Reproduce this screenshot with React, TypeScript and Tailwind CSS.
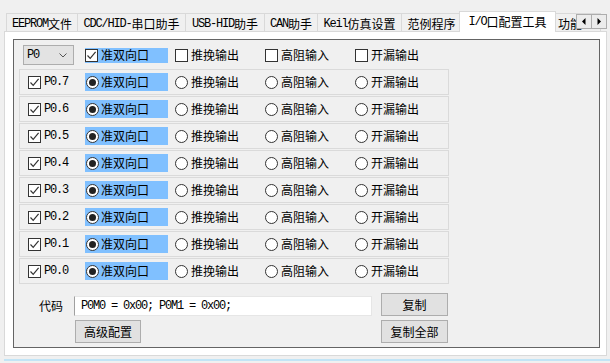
import React from "react";

const Mixed = ({ s }: { s: string }) => (
  <>
    {s
      .split(/([\x20-\x7e]+)/)
      .filter(Boolean)
      .map((p, i) =>
        /^[\x20-\x7e]+$/.test(p) ? (
          <span key={i} className="font-['Liberation_Mono',monospace] tracking-[-1.2px] whitespace-pre">
            {p}
          </span>
        ) : (
          <span key={i} className="font-['Noto_Sans_CJK_SC',sans-serif]">
            {p}
          </span>
        )
      )}
  </>
);

const Check = ({ on }: { on?: boolean }) => (
  <span className="w-[13px] h-[13px] border border-[#333333] bg-white flex items-center justify-center shrink-0">
    {on && (
      <svg width="11" height="11" viewBox="0 0 11 11">
        <path d="M1.5 5.5 L4.2 8.3 L9.6 1.8" fill="none" stroke="#333333" strokeWidth="1.2" />
      </svg>
    )}
  </span>
);

const Radio = ({ on }: { on?: boolean }) => (
  <span className="w-[13px] h-[13px] rounded-full border border-[#333333] bg-white flex items-center justify-center shrink-0">
    {on && <span className="w-[7px] h-[7px] rounded-full bg-[#222222]" />}
  </span>
);

const tabs: { label: string; w: string; sel?: boolean }[] = [
  { label: "EEPROM文件", w: "w-[72px]" },
  { label: "CDC/HID-串口助手", w: "w-[109px]" },
  { label: "USB-HID助手", w: "w-[80px]" },
  { label: "CAN助手", w: "w-[54px]" },
  { label: "Keil仿真设置", w: "w-[85px]" },
  { label: "范例程序", w: "w-[61px]" },
];

const pins = ["P0.7", "P0.6", "P0.5", "P0.4", "P0.3", "P0.2", "P0.1", "P0.0"];
const opts = ["推挽输出", "高阻输入", "开漏输出"];

export default function App() {
  return (
    <div className="w-[610px] h-[363px] bg-[#f0f0f0] relative overflow-hidden text-[12px] leading-[14px] text-black font-['Noto_Sans_CJK_SC',sans-serif]">
      {/* tab strip */}
      <div className="h-[31px] flex items-end pl-[6px]">
        {tabs.map((t, i) => (
          <div
            key={t.label}
            className={`${t.w} h-[18px] ${i === 0 ? "" : "-ml-px"} border border-b-0 border-[#d9d9d9] bg-[#f0f0f0] flex items-center justify-center pt-[2px] whitespace-nowrap`}
          >
            <Mixed s={t.label} />
          </div>
        ))}
        <div className="relative z-10 w-[97px] h-[21px] -ml-[3px] -mb-px border border-b-0 border-[#d9d9d9] bg-white flex items-center justify-center whitespace-nowrap">
          <Mixed s="I/O口配置工具" />
        </div>
        <div className="w-[48px] h-[18px] -ml-[3px] border border-b-0 border-[#d9d9d9] bg-[#f0f0f0] flex items-center pl-[4px] pt-[2px] whitespace-nowrap overflow-hidden">
          <Mixed s="功能" />
        </div>
      </div>

      {/* tab scroll buttons */}
      <div className="absolute left-[576px] top-[14px] flex z-20">
        <div className="w-[16px] h-[15px] border border-[#adadad] bg-[#ececec] flex items-center justify-center">
          <svg width="4" height="7" viewBox="0 0 4 7">
            <path d="M3.5 0 L0 3.5 L3.5 7Z" fill="#000" />
          </svg>
        </div>
        <div className="w-[16px] h-[15px] -ml-px border border-[#adadad] bg-[#ececec] flex items-center justify-center">
          <svg width="4" height="7" viewBox="0 0 4 7">
            <path d="M0.5 0 L4 3.5 L0.5 7Z" fill="#000" />
          </svg>
        </div>
      </div>

      {/* tab page */}
      <div className="ml-[4px] w-[603px] h-[325px] border border-[#d9d9d9] bg-white pt-[7px] pl-[8px]">
        <div className="w-[587px] h-[309px] border border-[#646464] bg-[#f0f0f0] flex flex-col">
          {/* top row */}
          <div className="mt-[5px] h-[20px] flex items-center">
            <div className="ml-[9px] w-[51px] h-[20px] border border-[#adadad] bg-[#e3e3e3] flex items-center justify-between pl-[3px] pr-[6px]">
              <Mixed s="P0" />
              <svg width="8" height="5" viewBox="0 0 8 5">
                <path d="M0.5 0.5 L4 4 L7.5 0.5" fill="none" stroke="#555" strokeWidth="1" />
              </svg>
            </div>
            <div className="ml-[11px] w-[90px] flex items-center">
              <div className="w-[83px] h-[15px] bg-[#80c0ff] flex items-center gap-[3px]">
                <Check on />
                <span>准双向口</span>
              </div>
            </div>
            {opts.map((o) => (
              <div key={o} className="w-[90px] flex items-center gap-[3px]">
                <Check />
                <span>{o}</span>
              </div>
            ))}
          </div>

          {/* pin rows */}
          <div className="mt-[4px] flex flex-col gap-[1px]">
            {pins.map((p) => (
              <div key={p} className="ml-[5px] w-[430px] h-[26px] border border-[#dadada] flex items-center">
                <div className="w-[65px] pl-[8px] flex items-center gap-[3px]">
                  <Check on />
                  <Mixed s={p} />
                </div>
                <div className="w-[90px] flex items-center">
                  <div className="w-[83px] h-[18px] bg-[#80c0ff] flex items-center pl-[1px] gap-[2px]">
                    <Radio on />
                    <span>准双向口</span>
                  </div>
                </div>
                {opts.map((o) => (
                  <div key={o} className="w-[90px] flex items-center gap-[3px]">
                    <Radio />
                    <span>{o}</span>
                  </div>
                ))}
              </div>
            ))}
          </div>

          {/* code row */}
          <div className="mt-[9px] h-[23px] flex items-end">
            <div className="w-[60px] h-[20px] pl-[25px] flex items-center">代码</div>
            <div className="w-[298px] h-[20px] bg-white border border-[#e6e6e6] border-l-[#a0a0a0] flex items-center pl-[6px]">
              <Mixed s="P0M0 = 0x00; P0M1 = 0x00;" />
            </div>
            <div className="ml-[9px] w-[67px] h-[23px] border border-[#adadad] bg-[#e1e1e1] flex items-center justify-center">
              复制
            </div>
          </div>
          <div className="mt-[4px] h-[23px] flex">
            <div className="ml-[61px] w-[66px] h-[23px] border border-[#adadad] bg-[#e1e1e1] flex items-center justify-center">
              高级配置
            </div>
            <div className="ml-[240px] w-[67px] h-[23px] border border-[#adadad] bg-[#e1e1e1] flex items-center justify-center">
              复制全部
            </div>
          </div>
        </div>
      </div>

      <div className="mt-[3px] ml-[4px] h-[2px] bg-[#c2e4f6]" />
    </div>
  );
}
